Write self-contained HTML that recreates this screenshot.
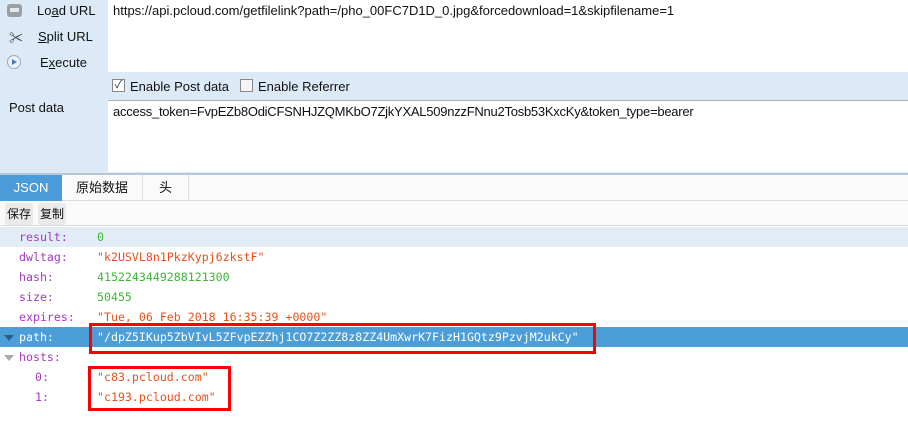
<!DOCTYPE html>
<html><head><meta charset="utf-8"><style>
*{margin:0;padding:0;box-sizing:border-box}
body{width:908px;height:436px;overflow:hidden;background:#fff;font-family:"Liberation Sans","Noto Sans CJK SC",sans-serif;font-size:13px;color:#111;position:relative}
.a{position:absolute}
.mono{font-family:"DejaVu Sans Mono","Liberation Mono",monospace;font-size:11.6px}
.k{color:#a33ac0}.s{color:#e8501c}.n{color:#3cb534}
</style></head><body>
<div class="a" style="left:0;top:0;width:908px;height:174px;background:#dce9f7"></div>
<div class="a" style="left:108px;top:0;width:800px;height:72px;background:#fff"></div>
<div class="a" style="left:108px;top:100px;width:800px;height:72px;background:#fff;border-top:1px solid #b0b0b0"></div>
<div class="a" style="left:0;top:173px;width:908px;height:2px;background:#b8c6d8"></div>
<div class="a" style="left:7px;top:4px;width:15px;height:13px;background:#9aa0a6;border-radius:3px"></div>
<div class="a" style="left:10px;top:8px;width:9px;height:4px;background:#e8e8e8"></div>
<div class="a" style="left:9px;top:28px;font-size:14px;color:#333">✂</div>
<div class="a" style="left:7px;top:55px;width:14px;height:14px;border-radius:50%;background:#eaf2fb;border:1px solid #9ab"></div>
<div class="a" style="left:12px;top:59px;width:0;height:0;border-left:5px solid #4a7ab0;border-top:3px solid transparent;border-bottom:3px solid transparent"></div>
<div class="a" style="left:37px;top:3px">Lo<u>a</u>d URL</div>
<div class="a" style="left:38px;top:29px"><u>S</u>plit URL</div>
<div class="a" style="left:40px;top:55px">E<u>x</u>ecute</div>
<div class="a" style="left:113px;top:3px">https://api.pcloud.com/getfilelink?path=/pho_00FC7D1D_0.jpg&amp;forcedownload=1&amp;skipfilename=1</div>
<div class="a" style="left:112px;top:79px;width:13px;height:13px;border:1px solid #888;background:#fff;font-size:11px;line-height:11px;text-align:center;color:#335">✓</div>
<div class="a" style="left:130px;top:79px">Enable Post data</div>
<div class="a" style="left:240px;top:79px;width:13px;height:13px;border:1px solid #888;background:#f4f4f4"></div>
<div class="a" style="left:258px;top:79px">Enable Referrer</div>
<div class="a" style="left:9px;top:100px">Post data</div>
<div class="a" style="left:113px;top:104px;letter-spacing:-0.25px">access_token=FvpEZb8OdiCFSNHJZQMKbO7ZjkYXAL509nzzFNnu2Tosb53KxcKy&amp;token_type=bearer</div>
<div class="a" style="left:0;top:175px;width:908px;height:26px;background:#fafafa;border-bottom:1px solid #ddd"></div>
<div class="a" style="left:0;top:175px;width:62px;height:26px;background:#4a9bd8;color:#fff;text-align:center;line-height:26px">JSON</div>
<div class="a" style="left:62px;top:175px;width:81px;height:26px;border-right:1px solid #ddd;text-align:center;line-height:26px">原始数据</div>
<div class="a" style="left:143px;top:175px;width:46px;height:26px;border-right:1px solid #ddd;text-align:center;line-height:26px">头</div>
<div class="a" style="left:0;top:201px;width:908px;height:25px;background:#fafafa;border-bottom:1px solid #ddd"></div>
<div class="a" style="left:5px;top:203px;width:28px;height:22px;background:#eaeaea;border-radius:2px;line-height:22px;text-align:center;font-size:12px">保存</div>
<div class="a" style="left:38px;top:203px;width:28px;height:22px;background:#eaeaea;border-radius:2px;line-height:22px;text-align:center;font-size:12px">复制</div>
<div class="a" style="left:0;top:227px;width:908px;height:20px;background:#e2ecf7"></div>
<div class="a" style="left:0;top:327px;width:908px;height:20px;background:#4c9ed9"></div>
<div class="mono">
<div class="a k" style="left:19px;top:230px">result:</div><div class="a n" style="left:97px;top:230px">0</div>
<div class="a k" style="left:19px;top:250px">dwltag:</div><div class="a s" style="left:97px;top:250px">"k2USVL8n1PkzKypj6zkstF"</div>
<div class="a k" style="left:19px;top:270px">hash:</div><div class="a n" style="left:97px;top:270px">4152243449288121300</div>
<div class="a k" style="left:19px;top:290px">size:</div><div class="a n" style="left:97px;top:290px">50455</div>
<div class="a k" style="left:19px;top:310px">expires:</div><div class="a s" style="left:97px;top:310px">"Tue, 06 Feb 2018 16:35:39 +0000"</div>
<div class="a" style="left:4px;top:335px;border-top:6px solid #2a5f8a;border-left:5px solid transparent;border-right:5px solid transparent"></div>
<div class="a" style="left:19px;top:330px;color:#fff">path:</div><div class="a" style="left:97px;top:330px;color:#fff">"/dpZ5IKup5ZbVIvL5ZFvpEZZhj1CO7Z2ZZ8z8ZZ4UmXwrK7FizH1GQtz9PzvjM2ukCy"</div>
<div class="a" style="left:4px;top:355px;border-top:6px solid #aaa;border-left:5px solid transparent;border-right:5px solid transparent"></div>
<div class="a k" style="left:19px;top:350px">hosts:</div>
<div class="a k" style="left:35px;top:370px">0:</div><div class="a s" style="left:97px;top:370px">"c83.pcloud.com"</div>
<div class="a k" style="left:35px;top:390px">1:</div><div class="a s" style="left:97px;top:390px">"c193.pcloud.com"</div>
</div>
<div class="a" style="left:89px;top:323px;width:507px;height:31px;border:3px solid #f00"></div>
<div class="a" style="left:88px;top:366px;width:143px;height:45px;border:3px solid #f00"></div>
</body></html>
